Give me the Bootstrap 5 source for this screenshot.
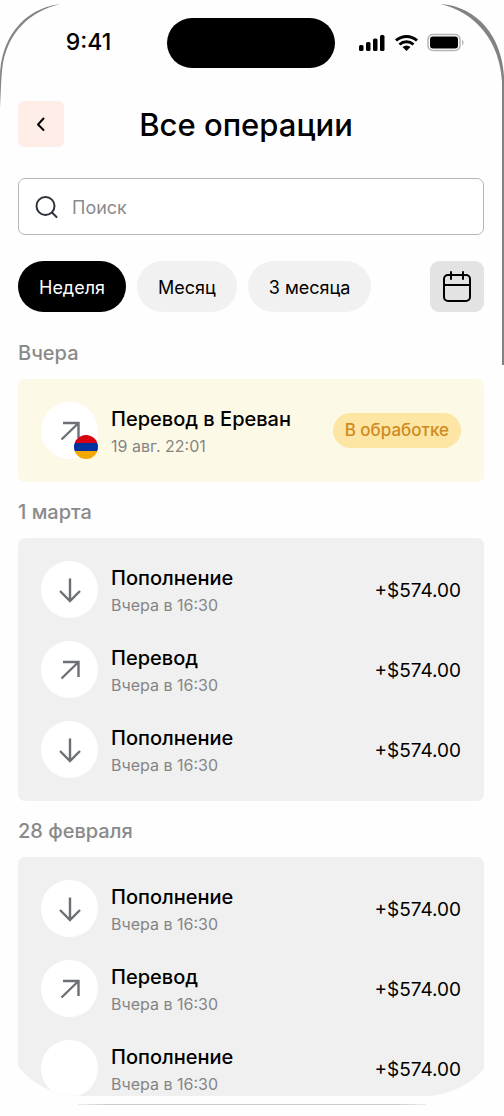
<!DOCTYPE html>
<html lang="ru">
<head>
<meta charset="utf-8">
<meta name="viewport" content="width=device-width, initial-scale=1">
<title>Все операции</title>
<link href="https://cdn.jsdelivr.net/npm/bootstrap@5.3.0/dist/css/bootstrap.min.css" rel="stylesheet">
<style>
body { font-family: Inter, "Noto Sans", sans-serif; color: #000; background: #fefefe; }
.phone { height: 100vh; padding-bottom: 20px; overflow: hidden; }
.phone-screen { height: 100%; overflow: hidden; padding: 18px 20px 0 18px; border-radius: 0 0 80px 80px; }
.frame-tl, .frame-tr, .frame-side, .frame-bottom { position: absolute; pointer-events: none; }
.frame-tl { top: 0; left: 0; }
.frame-tr { top: 0; right: 0; }
.frame-side { top: 100px; right: 0; width: 2px; height: 265px; background: #828282; }
.frame-bottom { bottom: 11px; left: 78px; right: 78px; height: 1px; background: linear-gradient(90deg, #eee, #ccc 8%, #ccc 92%, #eee); }
.statusbar { display: grid; grid-template-columns: 1fr 168px 1fr; height: 50px; column-gap: 24px; margin-bottom: 33px; }
.clock { font-size: 23px; line-height: 48px; font-weight: 500; padding-left: 16px; }
.island { background: #000; border-radius: 25px; }
.titlebar { display: grid; grid-template-columns: 46px 1fr 56px; height: 46px; margin-bottom: 31px; }
.back-btn { width: 46px; height: 46px; background: #ffeee8; border-radius: 6px; }
.page-title { font-size: 31px; line-height: 48px; font-weight: 500; }
.search-box { height: 57px; border: 1px solid #b5b5b5; border-radius: 7px; padding: 0 16px; gap: 13px; margin-bottom: 26px; background: #fff; }
.search-box input { font-size: 18px; line-height: 24px; padding: 2px 0 0; }
.search-box input::placeholder { color: #8b8b8b; opacity: 1; }
.filters { gap: 11px; margin-bottom: 11px; }
.chip { height: 51px; padding: 2px 21px 0; border-radius: 26px; font-size: 18px; line-height: 24px; background: #f1f1f1; color: #000; white-space: nowrap; }
.chip.selected { background: #000; color: #fff; }
.calendar-btn { width: 54px; height: 51px; border-radius: 9px; background: #e3e3e3; }
.day { font-size: 20px; line-height: 24px; font-weight: 500; color: #8a8a8a; margin: 0; padding: 18px 0 14px; }
.ops { background: #f0f0f0; border-radius: 7px; padding: 23px; gap: 23px; }
.ops.pending { background: #fdf9e7; }
.op { height: 57px; gap: 13px; }
.disc { width: 57px; height: 57px; background: #fff; flex: none; position: relative; }
.flag { position: absolute; right: 0; bottom: 0; }
.op-text { padding-top: 3px; }
.op-name { font-size: 20px; line-height: 28px; font-weight: 500; }
.op-time { font-size: 16px; line-height: 26px; color: #858585; }
.op-sum { font-size: 19px; line-height: 28px; padding-top: 2px; }
.state { background: #fde5a3; color: #d08a1c; font-size: 17px; line-height: 35px; font-weight: 500; padding: 0 12px; border-radius: 18px; white-space: nowrap; }
</style>
</head>
<body>
<svg width="0" height="0" class="position-absolute" aria-hidden="true">
  <symbol id="down" viewBox="0 0 28 28"><path d="M14 2.500v22M4 15l10 10 10-10" fill="none" stroke="#6c6f75" stroke-width="2.400"/></symbol>
  <symbol id="out" viewBox="0 0 28 28"><path d="M5.500 22.500L22 6.500M7 6h15.500v15" fill="none" stroke="#6c6f75" stroke-width="2.400"/></symbol>
</svg>
<div class="phone position-relative">
  <svg class="frame-tl" width="62" height="110" aria-hidden="true"><path d="M60 4C22 9 0 40 0 78v30C1 90 1 76 3 63 9 32 29 12 60 4z" fill="#858585"/></svg>
  <svg class="frame-tr" width="66" height="110" aria-hidden="true"><path d="M2 4C40 6 64 38 66 76v34h-2V82C62 42 38 12 2 4z" fill="#828282"/></svg>
  <div class="frame-side"></div>
  <div class="frame-bottom"></div>
  <div class="phone-screen">
    <div class="statusbar">
      <div class="clock text-center">9:41</div>
      <div class="island"></div>
      <div class="d-flex align-items-center">
        <svg width="106" height="20" viewBox="0 0 106 20" aria-label="Связь, Wi-Fi, батарея" role="img">
          <g><rect x="0" y="12" width="4.500" height="6" rx="1.500"/><rect x="7" y="9" width="4.500" height="9" rx="1.500"/><rect x="14" y="5.500" width="4.500" height="12.500" rx="1.500"/><rect x="21" y="2" width="4.500" height="16" rx="1.500"/></g>
          <g fill="none" stroke="#000" stroke-width="3"><path d="M37 7.500C43 2 52 2 58 7.500"/><path d="M40.500 11.500c4-3.600 10-3.600 14 0"/></g>
          <path d="M43.500 14c2.500-2 5.500-2 8 0l-4 4z"/>
          <rect x="69" y="1.500" width="32" height="16" rx="5" fill="#fff" stroke="#b5b5b5" stroke-width="1.500"/>
          <rect x="71" y="3.500" width="28" height="12" rx="3"/>
          <path d="M103 7v5c2-.5 2-4.500 0-5z" fill="#b5b5b5"/>
        </svg>
      </div>
    </div>
    <header class="titlebar">
      <button class="back-btn btn p-0 border-0 d-flex align-items-center justify-content-center" type="button" aria-label="Назад">
        <svg width="16" height="16" viewBox="0 0 16 16"><path d="M10.500 2.500L5 8.500l5.500 5.500" fill="none" stroke="#000" stroke-width="2" stroke-linecap="round" stroke-linejoin="round"/></svg>
      </button>
      <h1 class="page-title text-center text-nowrap m-0">Все операции</h1>
    </header>
    <div class="search-box d-flex align-items-center">
      <label for="search" class="d-flex"><svg width="24" height="24" viewBox="0 0 24 24" role="img" aria-label="Поиск"><g fill="none" stroke="#2c313a" stroke-width="2" stroke-linecap="round"><circle cx="10.500" cy="11" r="9"/><path d="M17 17.500l4.500 4.500"/></g></svg></label>
      <input id="search" type="search" class="form-control border-0 shadow-none bg-transparent" placeholder="Поиск">
    </div>
    <div class="filters d-flex align-items-center">
      <button type="button" class="chip selected btn border-0">Неделя</button>
      <button type="button" class="chip btn border-0">Месяц</button>
      <button type="button" class="chip btn border-0">3 месяца</button>
      <button type="button" class="calendar-btn btn border-0 p-0 ms-auto d-flex align-items-center justify-content-center" aria-label="Календарь">
        <svg width="30" height="34" viewBox="0 0 30 34"><g fill="none" stroke="#000" stroke-width="2" stroke-linecap="round"><rect x="2" y="5" width="26" height="26" rx="4"/><path d="M2 15h26M9 2v7M21 2v7"/></g></svg>
      </button>
    </div>

    <h2 class="day">Вчера</h2>
    <div class="ops pending d-flex flex-column">
      <div class="op d-flex align-items-center">
        <div class="disc rounded-circle d-flex align-items-center justify-content-center">
          <svg width="28" height="28"><use href="#out"/></svg>
          <svg class="flag" width="24" height="24" viewBox="0 0 24 24" role="img" aria-label="Армения"><clipPath id="round"><circle cx="12" cy="12" r="12"/></clipPath><g clip-path="url(#round)"><path fill="#d90012" d="M0 0h24v8H0z"/><path fill="#0033a0" d="M0 8h24v8H0z"/><path fill="#f2a800" d="M0 16h24v8H0z"/></g></svg>
        </div>
        <div class="op-text flex-grow-1"><div class="op-name">Перевод в Ереван</div><div class="op-time">19 авг. 22:01</div></div>
        <span class="state">В обработке</span>
      </div>
    </div>

    <h2 class="day">1 марта</h2>
    <div class="ops d-flex flex-column">
      <div class="op d-flex align-items-center">
        <div class="disc rounded-circle d-flex align-items-center justify-content-center"><svg width="28" height="28"><use href="#down"/></svg></div>
        <div class="op-text flex-grow-1"><div class="op-name">Пополнение</div><div class="op-time">Вчера в 16:30</div></div>
        <div class="op-sum">+$574.00</div>
      </div>
      <div class="op d-flex align-items-center">
        <div class="disc rounded-circle d-flex align-items-center justify-content-center"><svg width="28" height="28"><use href="#out"/></svg></div>
        <div class="op-text flex-grow-1"><div class="op-name">Перевод</div><div class="op-time">Вчера в 16:30</div></div>
        <div class="op-sum">+$574.00</div>
      </div>
      <div class="op d-flex align-items-center">
        <div class="disc rounded-circle d-flex align-items-center justify-content-center"><svg width="28" height="28"><use href="#down"/></svg></div>
        <div class="op-text flex-grow-1"><div class="op-name">Пополнение</div><div class="op-time">Вчера в 16:30</div></div>
        <div class="op-sum">+$574.00</div>
      </div>
    </div>

    <h2 class="day">28 февраля</h2>
    <div class="ops d-flex flex-column">
      <div class="op d-flex align-items-center">
        <div class="disc rounded-circle d-flex align-items-center justify-content-center"><svg width="28" height="28"><use href="#down"/></svg></div>
        <div class="op-text flex-grow-1"><div class="op-name">Пополнение</div><div class="op-time">Вчера в 16:30</div></div>
        <div class="op-sum">+$574.00</div>
      </div>
      <div class="op d-flex align-items-center">
        <div class="disc rounded-circle d-flex align-items-center justify-content-center"><svg width="28" height="28"><use href="#out"/></svg></div>
        <div class="op-text flex-grow-1"><div class="op-name">Перевод</div><div class="op-time">Вчера в 16:30</div></div>
        <div class="op-sum">+$574.00</div>
      </div>
      <div class="op d-flex align-items-center">
        <div class="disc rounded-circle"></div>
        <div class="op-text flex-grow-1"><div class="op-name">Пополнение</div><div class="op-time">Вчера в 16:30</div></div>
        <div class="op-sum">+$574.00</div>
      </div>
    </div>
  </div>
</div>
<script src="https://cdn.jsdelivr.net/npm/bootstrap@5.3.0/dist/js/bootstrap.bundle.min.js"></script>
</body>
</html>
